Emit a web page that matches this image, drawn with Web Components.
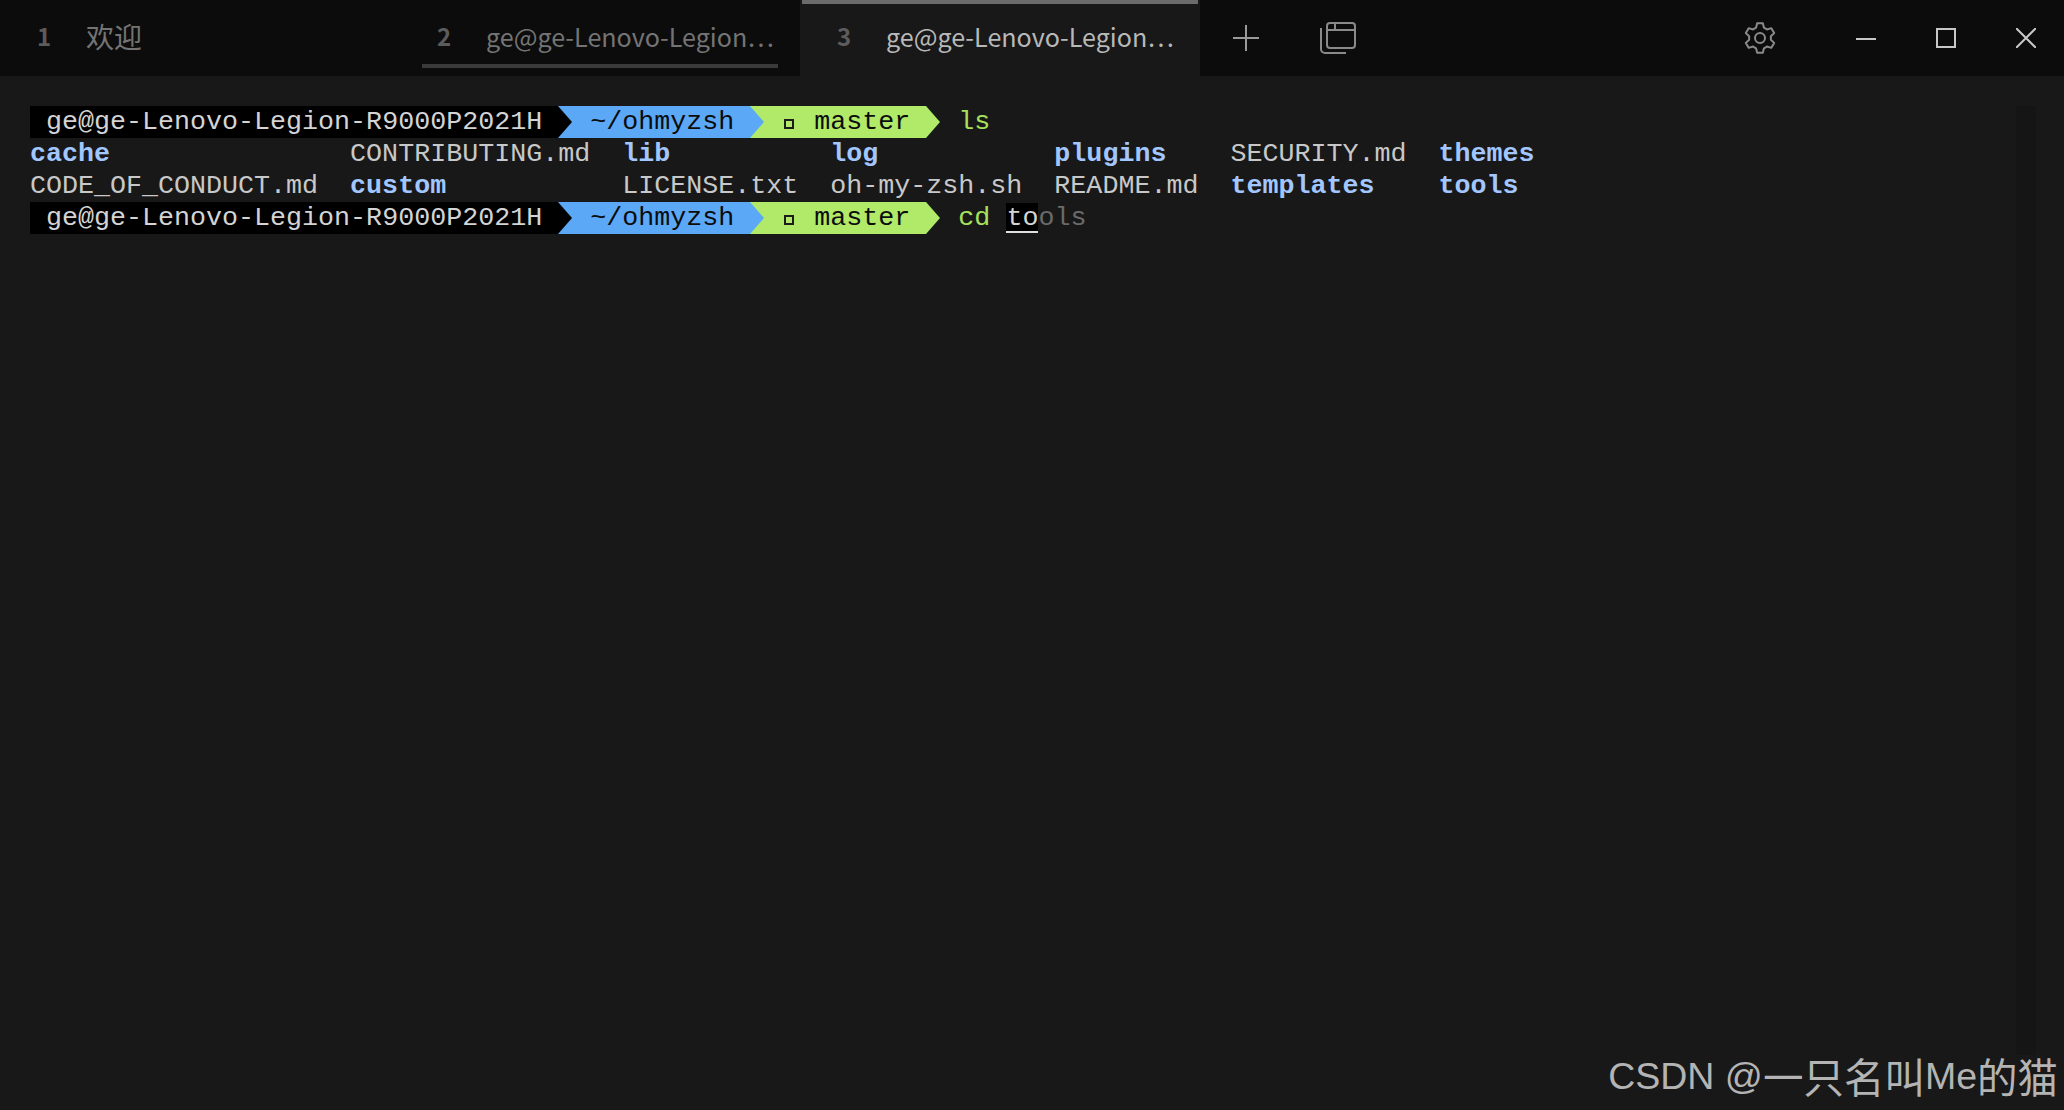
<!DOCTYPE html>
<html><head><meta charset="utf-8"><style>
html,body{margin:0;height:100%;background:#181818;overflow:hidden}
body{display:flex;flex-direction:column;height:1110px;width:2064px}
</style></head><body>
<win-titlebar>
<term-tab num="1" style="--num:#5c5c5c;--txt:#747474;--fs:28px">欢迎</term-tab>
<term-tab num="2" underline style="--num:#5c5c5c;--txt:#747474">ge@ge-Lenovo-Legion…</term-tab>
<term-tab num="3" active style="--num:#5c5c5c;--txt:#b8b8b8">ge@ge-Lenovo-Legion…</term-tab>
</win-titlebar>
<term-pane>
<term-prompt>ls</term-prompt>
<term-listing></term-listing>
<term-prompt cursor>cd</term-prompt>
</term-pane>
<script>
function def(name,css,html,init){
  customElements.define(name,class extends HTMLElement{
    constructor(){super();const r=this.attachShadow({mode:'open'});r.innerHTML='<style>'+css+'</style>'+html;}
    connectedCallback(){if(init)init.call(this,this.shadowRoot);}
  });
}
function gear(){
  const c=16,R=15,r=11,d=[];
  for(let i=0;i<6;i++){
    const a=-90+i*60;
    [[r,-21],[R,-11],[R,11],[r,21]].forEach(([m,o],j)=>{
      const t=(a+o)*Math.PI/180;
      d.push((i==0&&j==0?'M':'L')+(c+m*Math.cos(t)).toFixed(2)+' '+(c+m*Math.sin(t)).toFixed(2));
    });
  }
  return d.join('')+'Z';
}
def('term-tab',`
:host{display:flex;align-items:center;width:400px;height:76px;box-sizing:border-box;padding:0 0 5px 37px;position:relative;flex:none;font-family:"Noto Sans CJK SC","Noto Sans",sans-serif;font-size:var(--fs,25.1px)}
:host([active]){background:#181818}
.n{width:49px;font-weight:700;font-size:24px;color:var(--num)}
.t{color:var(--txt);white-space:nowrap}
.bar{display:none;position:absolute}
:host([underline]) .bar{display:block;left:22px;right:22px;top:64px;height:4px;background:#3a3a3a}
:host([active]) .bar{display:block;left:2px;right:2px;top:0;height:4px;background:#6b6b6b}
`,`<span class="n"></span><span class="t"><slot></slot></span><i class="bar"></i>`,function(r){r.querySelector('.n').textContent=this.getAttribute('num')});
def('icon-btn',`
:host{display:flex;align-items:center;justify-content:center;height:76px;flex:none;box-sizing:border-box}
`,`<slot></slot>`);
def('win-titlebar',`
:host{display:flex;height:76px;background:#0c0c0c;flex:none}
.sp{flex:1}
svg{display:block;fill:none}
`,`<slot></slot>
<icon-btn style="width:92px"><svg width="26" height="26" viewBox="0 0 26 26" stroke="#9a9a9a" stroke-width="2"><path d="M13 0V26M0 13H26"/></svg></icon-btn>
<icon-btn style="width:92px"><svg width="36" height="32" viewBox="0 0 36 32" stroke="#8a8a8a" stroke-width="2"><rect x="7" y="1" width="28" height="25" rx="3"/><path d="M7 8H35M15 1V8"/><path d="M1 6V27a4 4 0 0 0 4 4H26"/></svg></icon-btn>
<span class="sp"></span>
<icon-btn style="width:80px;margin-right:26px"><svg id="g" width="32" height="32" viewBox="0 0 32 32" stroke="#8a8a8a" stroke-width="2" stroke-linejoin="round"><circle cx="16" cy="16" r="5"/><path id="gp"/></svg></icon-btn>
<icon-btn style="width:80px"><svg width="20" height="20" viewBox="0 0 20 20" stroke="#c8c8c8" stroke-width="2"><path d="M0 11H20"/></svg></icon-btn>
<icon-btn style="width:80px"><svg width="20" height="20" viewBox="0 0 20 20" stroke="#c8c8c8" stroke-width="2"><rect x="1" y="1" width="18" height="18"/></svg></icon-btn>
<icon-btn style="width:78px;padding-left:2px"><svg width="20" height="20" viewBox="0 0 20 20" stroke="#c8c8c8" stroke-width="2"><path d="M0 0L20 20M20 0L0 20"/></svg></icon-btn>`,function(r){r.getElementById('gp').setAttribute('d',gear())});
def('term-pane',`
:host{display:block;flex:1;position:relative;box-sizing:border-box;padding:30px 0 0 30px;background:#181818;font:26.68px/32px "Liberation Mono",monospace;color:#c8c8c8}
.track{position:absolute;left:2016px;top:30px;bottom:55px;width:20px;background:#151515}
.wm{position:absolute;right:6px;top:974px;font:37.5px/52px "Liberation Sans",sans-serif;color:#b4b4b4;white-space:nowrap}
.wm span{font:40.5px/52px "Noto Sans CJK SC","Liberation Sans",sans-serif;vertical-align:top}
`,`<i class="track"></i><slot></slot><div class="wm">CSDN @<span>一只名叫</span>Me<span>的猫</span></div>`);
def('term-prompt',`
:host{display:flex;height:32px;white-space:pre}
.s{display:block;height:32px}
.k{background:#000;color:#d4d4d4}
.b{background:#5ba8f7;color:#0c0c0c}
.g{background:#b0ea68;color:#0c0c0c}
.a{display:block;width:16px;height:32px;flex:none}
.a svg{display:block}
.box{display:inline-block;width:16px;height:32px;vertical-align:top;position:relative}
.box i{position:absolute;left:2px;top:13px;width:10px;height:10px;box-sizing:border-box;border:2px solid #1c1c1c}
.c{color:#a6e05c}
.to{background:#000;color:#d4d4d4;box-shadow:inset 0 -2px 0 #e0e0e0}
.gh{color:#6a6a6a}
`,`<span class="s k"> ge@ge-Lenovo-Legion-R9000P2021H </span><span class="a" style="background:#5ba8f7"><svg width="16" height="32"><path d="M0 0L14 16L0 32Z" fill="#000"/></svg></span><span class="s b"> ~/ohmyzsh </span><span class="a" style="background:#b0ea68"><svg width="16" height="32"><path d="M0 0L14 16L0 32Z" fill="#5ba8f7"/></svg></span><span class="s g"> <span class="box"><i></i></span> master </span><span class="a"><svg width="16" height="32"><path d="M0 0L14 16L0 32Z" fill="#b0ea68"/></svg></span><span class="s c"> <slot></slot></span><span class="s x"></span>`,function(r){
  if(this.hasAttribute('cursor')){r.querySelector('.x').innerHTML=' <span class="to">to</span><span class="gh">ols</span>';}
});
def('term-listing',`
:host{display:grid;grid-template-columns:repeat(7,max-content);column-gap:32px;grid-auto-rows:32px;white-space:pre}
.d{color:#a2c6ff;font-weight:700}
`,`<span class="d">cache</span><span>CONTRIBUTING.md</span><span class="d">lib</span><span class="d">log</span><span class="d">plugins</span><span>SECURITY.md</span><span class="d">themes</span>
<span>CODE_OF_CONDUCT.md</span><span class="d">custom</span><span>LICENSE.txt</span><span>oh-my-zsh.sh</span><span>README.md</span><span class="d">templates</span><span class="d">tools</span>`);
</script>
</body></html>
